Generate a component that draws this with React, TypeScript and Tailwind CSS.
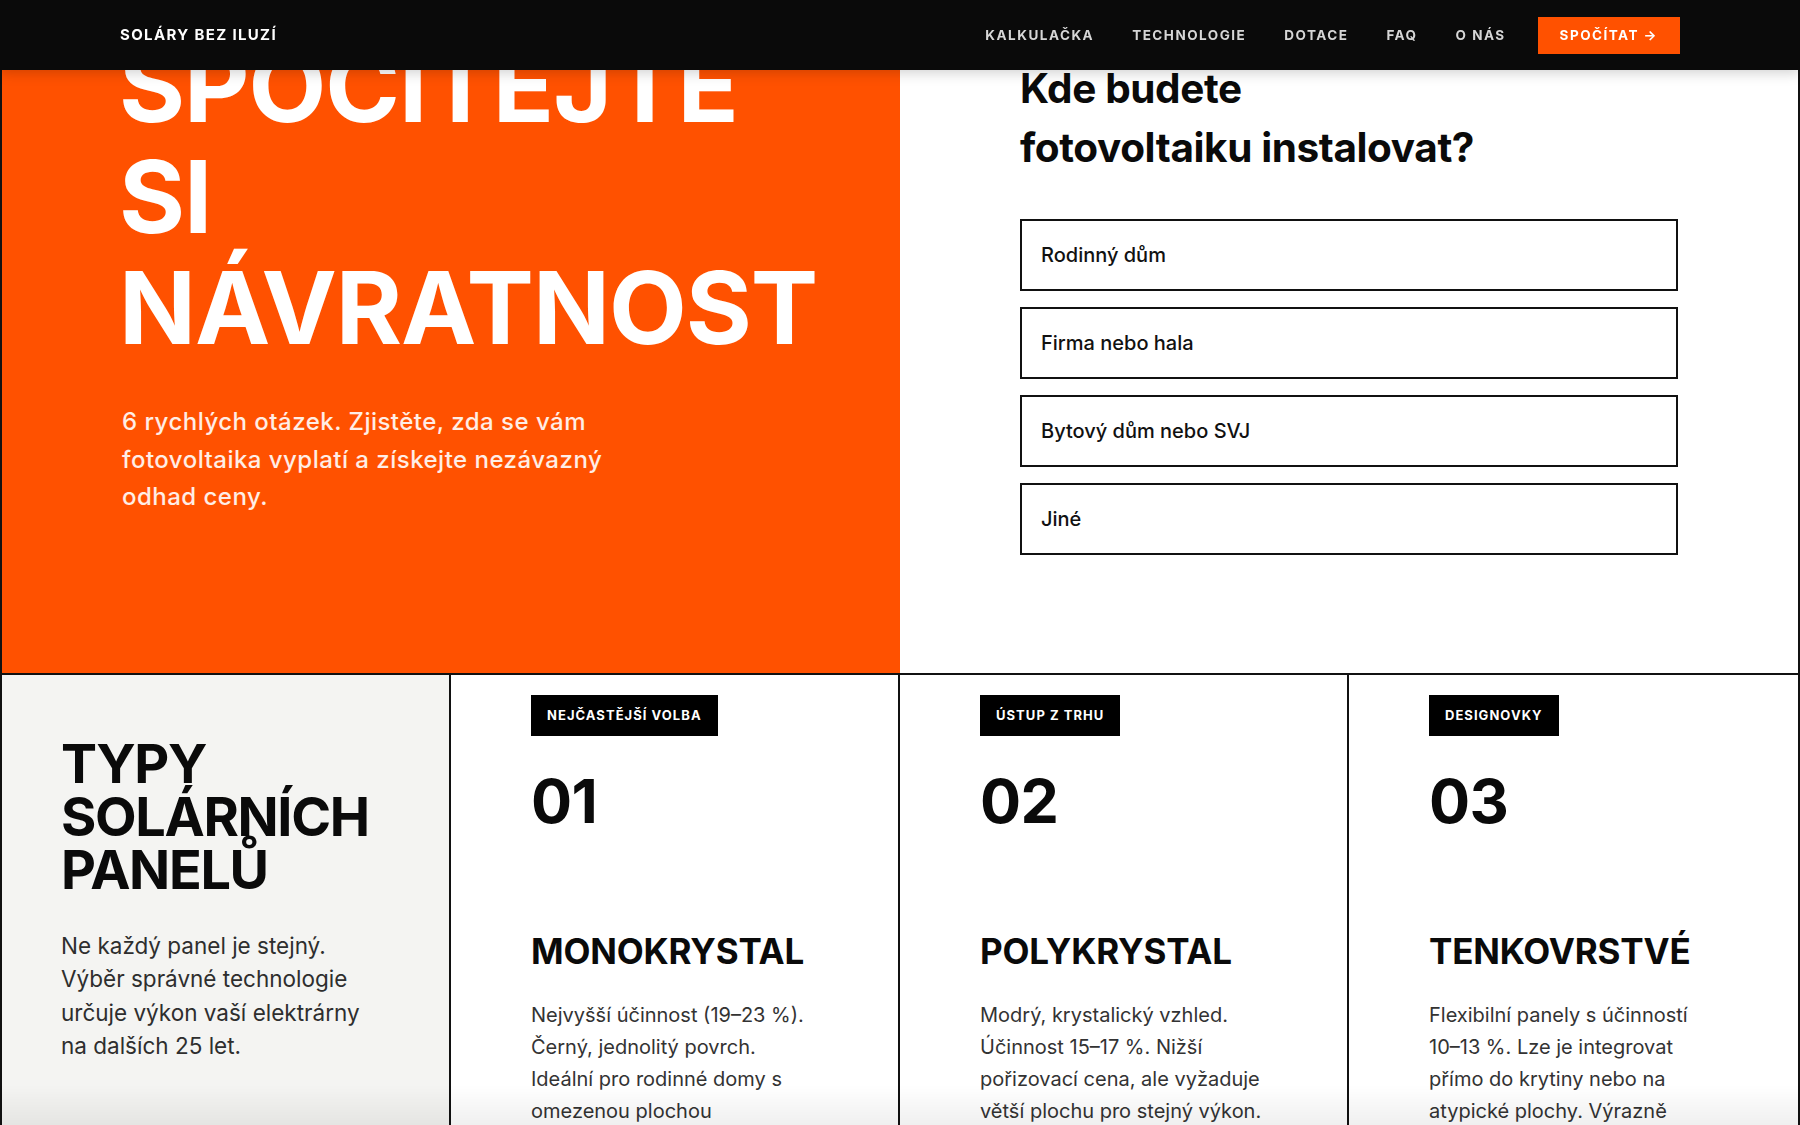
import React from "react";

const navItems = ["KALKULAČKA", "TECHNOLOGIE", "DOTACE", "FAQ", "O NÁS"];
const options = ["Rodinný dům", "Firma nebo hala", "Bytový dům nebo SVJ", "Jiné"];
const panels = [
  {
    badge: "NEJČASTĚJŠÍ VOLBA",
    num: "01",
    title: "MONOKRYSTAL",
    desc: "Nejvyšší účinnost (19–23 %). Černý, jednolitý povrch. Ideální pro rodinné domy s omezenou plochou",
    pr: "pr-[82px]",
  },
  {
    badge: "ÚSTUP Z TRHU",
    num: "02",
    title: "POLYKRYSTAL",
    desc: "Modrý, krystalický vzhled. Účinnost 15–17 %. Nižší pořizovací cena, ale vyžaduje větší plochu pro stejný výkon.",
    pr: "pr-[82px]",
  },
  {
    badge: "DESIGNOVKY",
    num: "03",
    title: "TENKOVRSTVÉ",
    desc: "Flexibilní panely s účinností 10–13 %. Lze je integrovat přímo do krytiny nebo na atypické plochy. Výrazně nižší výkon na m².",
    pr: "pr-[92px]",
  },
];

export default function App() {
  return (
    <div className="relative h-[1125px] overflow-hidden bg-white font-['Inter','Noto_Sans',sans-serif] text-[#0a0a0a]">
      <header className="fixed inset-x-0 top-0 z-20 h-[70px] bg-[#0a0a0a] shadow-[0_3px_12px_rgba(0,0,0,0.18)]">
        <div className="flex h-full items-center justify-between px-[120px]">
          <div className="text-[15px] font-bold tracking-[0.09em] text-white">SOLÁRY BEZ ILUZÍ</div>
          <nav className="flex items-center gap-[38px]">
            {navItems.map((n) => (
              <span key={n} className="text-[13.5px] font-bold tracking-[0.11em] text-[#d6d6d6]">
                {n}
              </span>
            ))}
            <span className="-ml-[6px] flex h-[37px] items-center bg-[#ff5100] px-[22px] text-[13.5px] font-bold tracking-[0.11em] text-white">
              SPOČÍTAT →
            </span>
          </nav>
        </div>
      </header>

      <main className="border-x-2 border-[#111]">
        <section className="grid h-[675px] grid-cols-2 border-b-2 border-[#111]">
          <div className="bg-[#ff5100] pl-[117px] pt-[30px]">
            <h1 className="text-[101px] font-bold leading-[111px] tracking-[-0.01em] text-white">
              SPOČÍTEJTE
              <br />
              SI
              <br />
              NÁVRATNOST
            </h1>
            <p className="mt-[40px] max-w-[515px] pl-[3px] text-[24px] font-medium leading-[37.5px] tracking-[0.02em] text-white/90">
              6 rychlých otázek. Zjistěte, zda se vám fotovoltaika vyplatí a získejte nezávazný odhad ceny.
            </p>
          </div>
          <div className="bg-white pl-[120px] pr-[120px] pt-[59px]">
            <h2 className="text-[40.5px] font-bold leading-[59px] tracking-[-0.01em]">
              Kde budete
              <br />
              fotovoltaiku instalovat?
            </h2>
            <div className="mt-[42px] flex flex-col gap-[16px]">
              {options.map((o) => (
                <div
                  key={o}
                  className="flex h-[72px] items-center border-2 border-[#111] px-[19px] text-[20px] font-medium text-[#111]"
                >
                  {o}
                </div>
              ))}
            </div>
          </div>
        </section>

        <section className="grid grid-cols-4">
          <div className="h-[452px] border-r-2 border-[#111] bg-[#f4f4f2] pl-[59px] pr-[75px] pt-[62px]">
            <h2 className="text-[54px] font-bold leading-[53px] tracking-[-0.025em]">
              TYPY
              <br />
              SOLÁRNÍCH
              <br />
              PANELŮ
            </h2>
            <p className="mt-[33px] text-[22.5px] leading-[33.3px] text-[#2e2e2e]">
              Ne každý panel je stejný. Výběr správné technologie určuje výkon vaší elektrárny na dalších 25 let.
            </p>
          </div>
          {panels.map((p, i) => (
            <div
              key={p.num}
              className={`h-[452px] bg-white pl-[80px] pt-[20px] ${p.pr} ${i < 2 ? "border-r-2 border-[#111]" : ""}`}
            >
              <span className="inline-flex h-[41px] items-center bg-black px-[16px] text-[13px] font-bold tracking-[0.08em] text-white">
                {p.badge}
              </span>
              <div className="mt-[35px] text-[61px] font-bold leading-[60px] tracking-[-0.01em]">{p.num}</div>
              <h3 className="mt-[99px] text-[35px] font-bold leading-[43px] tracking-[-0.005em]">{p.title}</h3>
              <p className="mt-[26px] text-[20px] leading-[32px] text-[#333]">{p.desc}</p>
            </div>
          ))}
        </section>
      </main>

      <div className="pointer-events-none fixed inset-x-0 bottom-0 z-10 h-[40px] bg-linear-to-b from-transparent to-black/[0.06]" />
    </div>
  );
}
